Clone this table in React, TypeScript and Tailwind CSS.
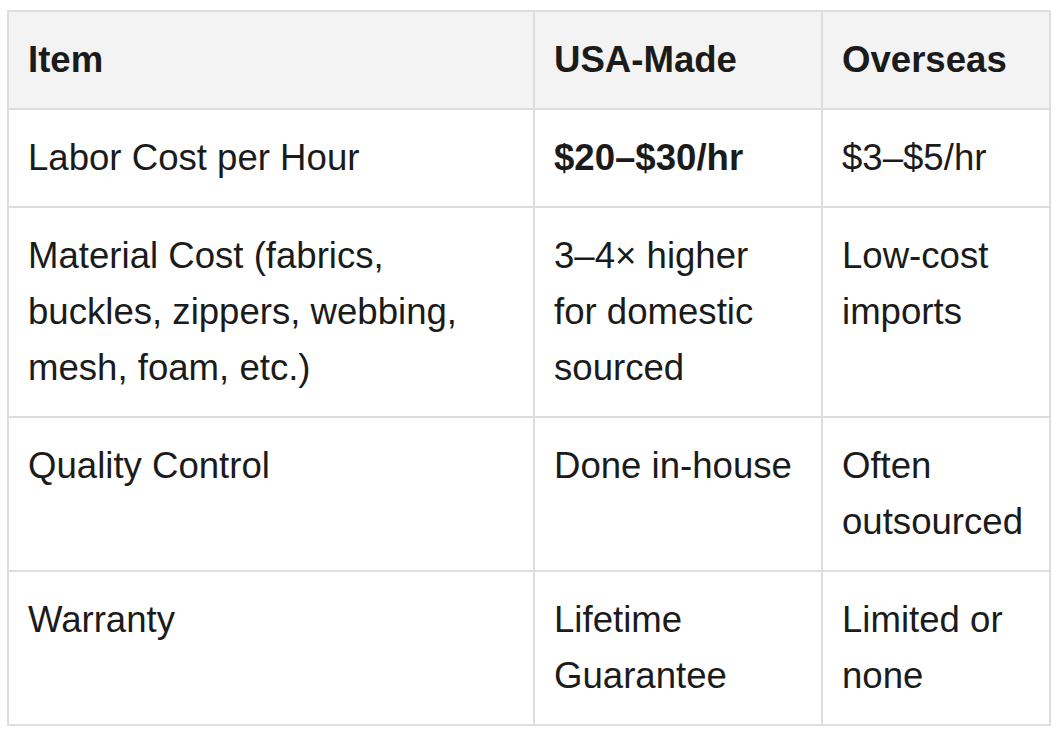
const rows: { item: string; usa: string; overseas: string; bold?: boolean }[] = [
  { item: "Labor Cost per Hour", usa: "$20–$30/hr", overseas: "$3–$5/hr", bold: true },
  {
    item: "Material Cost (fabrics, buckles, zippers, webbing, mesh, foam, etc.)",
    usa: "3–4× higher for domestic sourced",
    overseas: "Low-cost imports",
  },
  { item: "Quality Control", usa: "Done in-house", overseas: "Often outsourced" },
  { item: "Warranty", usa: "Lifetime Guarantee", overseas: "Limited or none" },
];

const cell = "border-2 border-[#dddddd] pl-[19px] pr-[22px] py-[20px] align-top text-left";

export default function App() {
  return (
    <div className="bg-white w-[1062px] h-[732px] pt-[10px] pl-[7px] font-['Liberation_Sans',Arial,sans-serif] text-[36.6px] leading-[56px] text-[#1b1b1b]">
      <table className="border-collapse table-fixed w-[1042px]">
        <colgroup>
          <col className="w-[526px]" />
          <col className="w-[288px]" />
          <col className="w-[228px]" />
        </colgroup>
        <thead>
          <tr className="bg-[#f3f3f3]">
            <th className={`${cell} font-bold`}>Item</th>
            <th className={`${cell} font-bold`}>USA-Made</th>
            <th className={`${cell} font-bold`}>Overseas</th>
          </tr>
        </thead>
        <tbody>
          {rows.map((r) => (
            <tr key={r.item}>
              <td className={cell}>{r.item}</td>
              <td className={`${cell} ${r.bold ? "font-bold" : ""}`}>{r.usa}</td>
              <td className={cell}>{r.overseas}</td>
            </tr>
          ))}
        </tbody>
      </table>
    </div>
  );
}
